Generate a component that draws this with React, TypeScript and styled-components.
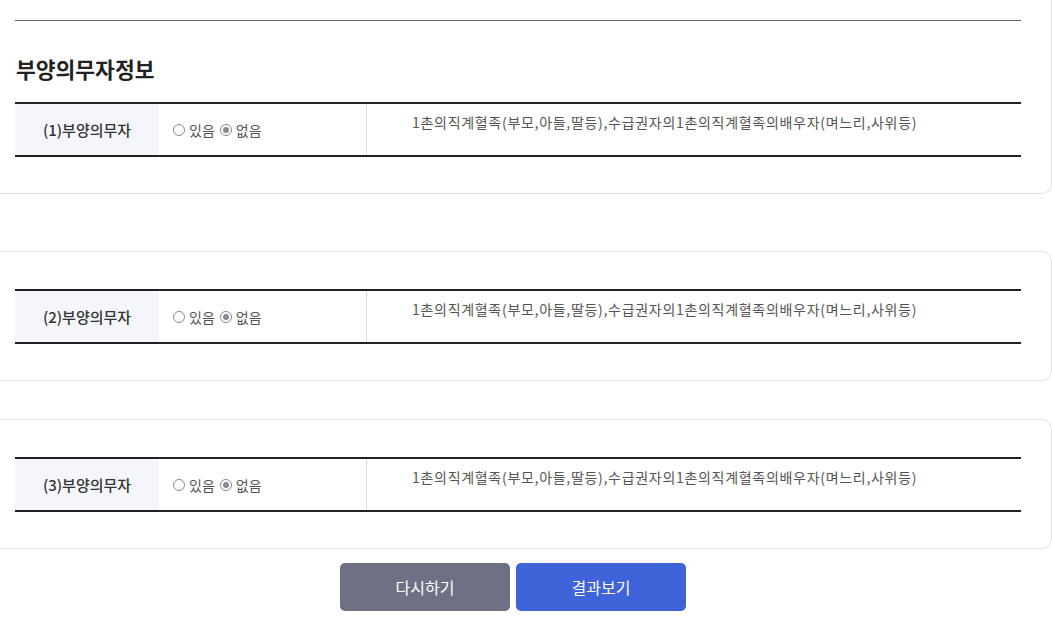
import * as React from 'react';
import styled, { createGlobalStyle } from 'styled-components';

const GlobalStyle = createGlobalStyle`
  html, body {
    margin: 0;
    padding: 0;
    background: #ffffff;
    overflow: hidden;
  }
  body {
    font-family: 'Noto Sans CJK KR', 'Noto Sans', sans-serif;
    color: #333333;
  }
`;

const Page = styled.div`
  width: 1052px;
  padding-bottom: 20px;
`;

const Card = styled.section<{ $top: number; $first?: boolean }>`
  margin: ${p => p.$top}px 0 0 -20px;
  width: 1072px;
  box-sizing: border-box;
  border: 1px solid #e2e2e2;
  border-radius: 10px;
  padding: ${p => (p.$first ? '0' : '37px')} 30px 36px 34px;
  ${p => p.$first && 'border-top: none; border-top-left-radius: 0; border-top-right-radius: 0;'}
`;

const Divider = styled.hr`
  margin: 0;
  padding-top: 20px;
  border: none;
  border-bottom: 1px solid #666666;
  width: 1006px;
  height: 0;
`;

const Heading = styled.h2`
  margin: 0;
  padding: 33px 0 18px 1px;
  font-size: 21.5px;
  line-height: 30px;
  font-weight: 700;
  color: #222222;
`;

const Table = styled.table`
  width: 1006px;
  border-collapse: collapse;
  border-top: 2px solid #222222;
  border-bottom: 2px solid #222222;
  table-layout: fixed;
`;

const Row = styled.tr`
  height: 53px;
`;

const LabelCell = styled.th`
  width: 144px;
  padding: 0;
  background: #f5f6fb;
  font-size: 15px;
  line-height: 20px;
  font-weight: 500;
  color: #333333;
  text-align: center;
  vertical-align: middle;
`;

const ChoiceCell = styled.td`
  width: 193px;
  padding: 0 0 0 14px;
  line-height: 20px;
  vertical-align: middle;
  border-right: 1px solid #dddddd;
`;

const NoteCell = styled.td`
  padding: 8px 0 0 45px;
  vertical-align: top;
  font-size: 14px;
  line-height: 20px;
  font-weight: 400;
  color: #555555;
  letter-spacing: 0.7px;
`;

const Choice = styled.label`
  display: inline-flex;
  align-items: center;
  gap: 4px;
  margin-right: 5px;
  font-size: 14px;
  color: #555555;
`;

const RadioMark = styled.span<{ $checked?: boolean }>`
  position: relative;
  display: inline-block;
  width: 12px;
  height: 12px;
  box-sizing: border-box;
  border: 1px solid #8a8a8a;
  border-radius: 50%;
  background: #ffffff;
  &::after {
    content: '';
    display: ${p => (p.$checked ? 'block' : 'none')};
    position: absolute;
    left: 2px;
    top: 2px;
    width: 6px;
    height: 6px;
    border-radius: 50%;
    background: #8a8a8a;
  }
`;

const ButtonRow = styled.div`
  width: 1026px;
  display: flex;
  justify-content: center;
  gap: 6px;
  margin-top: 14px;
`;

const Button = styled.button<{ $primary?: boolean }>`
  width: 170px;
  height: 48px;
  border: none;
  border-radius: 5px;
  background: ${p => (p.$primary ? '#3f63d8' : '#6e7184')};
  color: #ffffff;
  font-family: 'Noto Sans CJK KR', 'Noto Sans', sans-serif;
  font-size: 16px;
  cursor: pointer;
`;

const NOTE = '1촌의직계혈족(부모,아들,딸등),수급권자의1촌의직계혈족의배우자(며느리,사위등)';

const SupporterTable = ({ index }: { index: number }) => (
  <Table>
    <tbody>
      <Row>
        <LabelCell>({index})부양의무자</LabelCell>
        <ChoiceCell>
          <Choice><RadioMark />있음</Choice>
          <Choice><RadioMark $checked />없음</Choice>
        </ChoiceCell>
        <NoteCell>{NOTE}</NoteCell>
      </Row>
    </tbody>
  </Table>
);

const App = () => {
  return (
    <Page>
      <GlobalStyle />
      <Card $top={0} $first>
        <Divider />
        <Heading>부양의무자정보</Heading>
        <SupporterTable index={1} />
      </Card>
      <Card $top={57}>
        <SupporterTable index={2} />
      </Card>
      <Card $top={38}>
        <SupporterTable index={3} />
      </Card>
      <ButtonRow>
        <Button type="button">다시하기</Button>
        <Button type="button" $primary>결과보기</Button>
      </ButtonRow>
    </Page>
  );
};

export default App;
